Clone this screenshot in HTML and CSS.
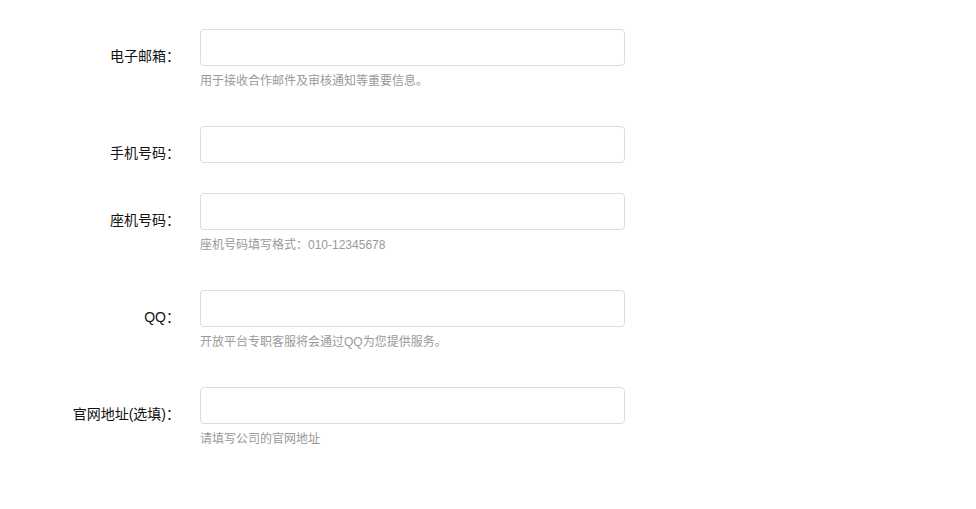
FILE: index.html
```html
<!DOCTYPE html>
<html lang="zh-CN">
<head>
  <meta charset="UTF-8" />
  <title>联系信息</title>
  <link rel="stylesheet" href="styles.css">
</head>
<body>
  <form class="form">
    <div class="row">
      <label class="label" for="email">电子邮箱：</label>
      <div class="field">
        <input class="input" type="text" id="email">
        <p class="hint">用于接收合作邮件及审核通知等重要信息。</p>
      </div>
    </div>

    <div class="row">
      <label class="label" for="mobile">手机号码：</label>
      <div class="field">
        <input class="input" type="text" id="mobile">
      </div>
    </div>

    <div class="row">
      <label class="label" for="phone">座机号码：</label>
      <div class="field">
        <input class="input" type="text" id="phone">
        <p class="hint">座机号码填写格式：010-12345678</p>
      </div>
    </div>

    <div class="row">
      <label class="label" for="qq">QQ：</label>
      <div class="field">
        <input class="input" type="text" id="qq">
        <p class="hint">开放平台专职客服将会通过QQ为您提供服务。</p>
      </div>
    </div>

    <div class="row">
      <label class="label" for="site">官网地址(选填)：</label>
      <div class="field">
        <input class="input" type="text" id="site">
        <p class="hint">请填写公司的官网地址</p>
      </div>
    </div>
  </form>
</body>
</html>
```

FILE: styles.css
```css
body {
  margin: 0;
  background: #fff;
  font-family: "Liberation Sans", "Noto Sans CJK SC", sans-serif;
  color: #111;
}
.form {
  padding-top: 29px;
}
.row {
  display: flex;
  gap: 20px;
  margin-bottom: 30px;
}
.label {
  width: 180px;
  text-align: right;
  font-size: 14px;
  line-height: 20px;
  padding-top: 17px;
}
.field {
  width: 425px;
}
.input {
  display: block;
  box-sizing: border-box;
  width: 425px;
  height: 37px;
  margin: 0;
  border: 1px solid #dcdcdc;
  border-radius: 4px;
  background: #fff;
  outline: none;
}
.hint {
  margin: 0;
  font-size: 12px;
  line-height: 30px;
  color: #999;
}
```
